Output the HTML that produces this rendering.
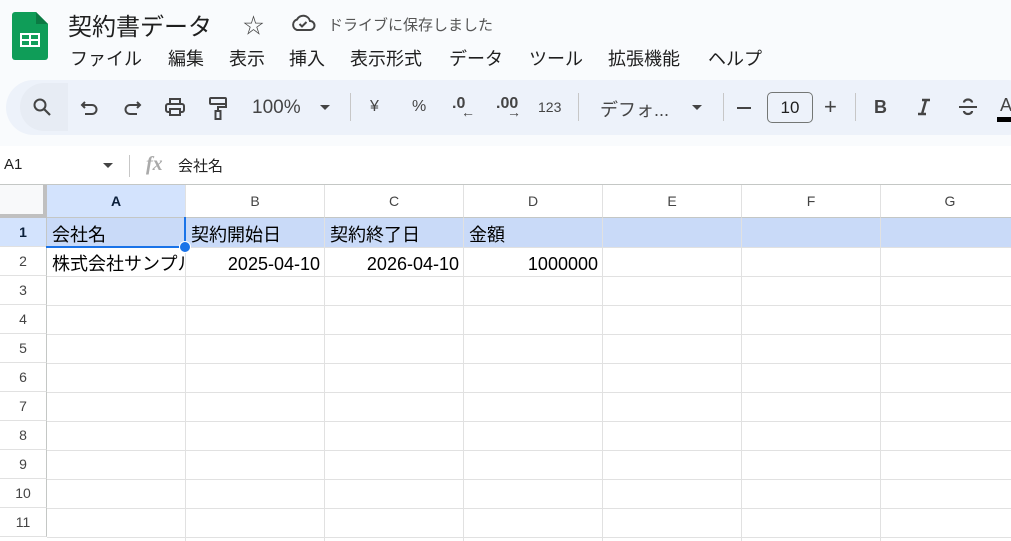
<!DOCTYPE html><html><head><meta charset="utf-8"><style>
*{margin:0;padding:0;box-sizing:border-box}
body{width:1011px;height:541px;overflow:hidden;background:#f9fbfd;font-family:"Liberation Sans","Noto Sans CJK JP",sans-serif;position:relative;color:#1f1f1f}
.a{position:absolute;white-space:nowrap}
.tb{position:absolute;left:6px;top:80px;width:1030px;height:55px;background:#edf2fa;border-radius:28px}
.sep{position:absolute;top:93px;width:1px;height:28px;background:#c7c7c7}
.grid{position:absolute;left:0;top:185px;width:1011px;height:356px;background:#fff}
.ch{position:absolute;top:185px;height:33px;border-right:1px solid #e1e1e1;border-bottom:1px solid #c4c7c5;font-size:14px;color:#444;text-align:center;line-height:33px;background:#fff}
.rh{position:absolute;left:0;width:47px;height:29px;border-bottom:1px solid #e1e1e1;border-right:1px solid #c4c7c5;font-size:14px;color:#444;text-align:center;line-height:29px;background:#fff}
.hl{position:absolute;top:218px;height:29px;left:47px;width:964px;background:#c9daf8}
.vl{position:absolute;top:218px;width:1px;height:323px;background:#e1e1e1}
.hz{position:absolute;left:47px;width:964px;height:1px;background:#e1e1e1}
.c{position:absolute;font-size:18px;color:#000;line-height:22px;white-space:nowrap}
</style></head><body>
<svg class="a" style="left:12px;top:12px" width="36" height="48" viewBox="0 0 36 48"><path d="M3 0h21l12 12v33a3 3 0 0 1-3 3H3a3 3 0 0 1-3-3V3a3 3 0 0 1 3-3z" fill="#0f9d58"/><path d="M24 0l12 12H24z" fill="#0b7a43"/><rect x="8" y="21" width="20" height="14" fill="#fff"/><rect x="10" y="23" width="7" height="4" fill="#0f9d58"/><rect x="19" y="23" width="7" height="4" fill="#0f9d58"/><rect x="10" y="29" width="7" height="4" fill="#0f9d58"/><rect x="19" y="29" width="7" height="4" fill="#0f9d58"/></svg>
<div class="a" style="left:68px;top:7px;font-size:24px;color:#1f1f1f">契約書データ</div>
<div class="a" style="left:243px;top:10px;font-size:21px;color:#444">☆</div>
<svg class="a" style="left:290px;top:13px" width="26" height="20" viewBox="0 0 26 20"><path d="M7 17h13a4.5 4.5 0 0 0 0-9 7 7 0 0 0-13-1.5A5.5 5.5 0 0 0 7 17z" fill="none" stroke="#444" stroke-width="2"/><path d="M9.5 11l2.5 2.5 4.5-4.5" fill="none" stroke="#444" stroke-width="2"/></svg>
<div class="a" style="left:328px;top:14px;font-size:15px;color:#555">ドライブに保存しました</div>
<div class="a" style="left:70px;top:45px;font-size:18px">ファイル</div>
<div class="a" style="left:168px;top:45px;font-size:18px">編集</div>
<div class="a" style="left:229px;top:45px;font-size:18px">表示</div>
<div class="a" style="left:289px;top:45px;font-size:18px">挿入</div>
<div class="a" style="left:350px;top:45px;font-size:18px">表示形式</div>
<div class="a" style="left:449px;top:45px;font-size:18px">データ</div>
<div class="a" style="left:529px;top:45px;font-size:18px">ツール</div>
<div class="a" style="left:608px;top:45px;font-size:18px">拡張機能</div>
<div class="a" style="left:708px;top:45px;font-size:18px">ヘルプ</div>
<div class="tb"></div>
<div class="a" style="left:20px;top:83px;width:48px;height:48px;background:#e7ecf4;border-radius:24px 0 0 24px"></div>
<svg class="a" style="left:32px;top:97px" width="20" height="20" viewBox="0 0 20 20"><circle cx="8" cy="8" r="5.5" fill="none" stroke="#444" stroke-width="2"/><path d="M12 12l6 6" stroke="#444" stroke-width="2.2"/></svg>
<svg class="a" style="left:80px;top:98px" width="20" height="18" viewBox="0 0 20 18"><path d="M5 4L2 7l3 3M2 7h10a4.5 4.5 0 0 1 0 9H5" fill="none" stroke="#444" stroke-width="2"/></svg>
<svg class="a" style="left:122px;top:98px" width="20" height="18" viewBox="0 0 20 18"><path d="M15 4l3 3-3 3M18 7H8a4.5 4.5 0 0 0 0 9h7" fill="none" stroke="#444" stroke-width="2"/></svg>
<svg class="a" style="left:164px;top:97px" width="22" height="20" viewBox="0 0 22 20"><rect x="2" y="7" width="18" height="8" rx="2" fill="none" stroke="#444" stroke-width="2"/><rect x="6" y="2" width="10" height="5" fill="none" stroke="#444" stroke-width="2"/><rect x="6" y="12" width="10" height="6" fill="#edf2fa" stroke="#444" stroke-width="2"/></svg>
<svg class="a" style="left:207px;top:96px" width="22" height="24" viewBox="0 0 22 24"><rect x="3" y="2" width="16" height="6" rx="1" fill="none" stroke="#444" stroke-width="2"/><path d="M19 5h0v6H11v4" fill="none" stroke="#444" stroke-width="2"/><rect x="8.5" y="15" width="5" height="8" fill="none" stroke="#444" stroke-width="2"/></svg>
<div class="a" style="left:252px;top:97px;font-size:19px;color:#444">100%</div>
<div class="a" style="left:320px;top:105px;width:0;height:0;border-left:5px solid transparent;border-right:5px solid transparent;border-top:5px solid #444"></div>
<div class="sep" style="left:350px"></div>
<div class="a" style="left:370px;top:98px;font-size:16px;color:#444">¥</div>
<div class="a" style="left:412px;top:98px;font-size:16px;color:#444">%</div>
<div class="a" style="left:452px;top:95px;font-size:16px;color:#444;font-weight:bold">.0</div>
<div class="a" style="left:461px;top:104px;font-size:14px;color:#444;font-weight:bold">←</div>
<div class="a" style="left:496px;top:95px;font-size:16px;color:#444;font-weight:bold">.00</div>
<div class="a" style="left:507px;top:104px;font-size:14px;color:#444;font-weight:bold">→</div>
<div class="a" style="left:538px;top:99px;font-size:14px;color:#444">123</div>
<div class="sep" style="left:578px"></div>
<div class="a" style="left:600px;top:96px;font-size:18px;color:#444">デフォ...</div>
<div class="a" style="left:692px;top:105px;width:0;height:0;border-left:5px solid transparent;border-right:5px solid transparent;border-top:5px solid #444"></div>
<div class="sep" style="left:723px"></div>
<div class="a" style="left:737px;top:107px;width:14px;height:2px;background:#444"></div>
<div class="a" style="left:767px;top:92px;width:46px;height:31px;border:1px solid #747775;border-radius:5px;font-size:17px;color:#1f1f1f;text-align:center;line-height:29px">10</div>
<div class="a" style="left:824px;top:94px;font-size:22px;color:#444">+</div>
<div class="sep" style="left:855px"></div>
<div class="a" style="left:874px;top:97px;font-size:18px;color:#444;font-weight:bold">B</div>
<svg class="a" style="left:914px;top:97px" width="20" height="20" viewBox="0 0 20 20"><path d="M8 3h8M4 17h8M12 3L8 17" stroke="#444" stroke-width="2.4" fill="none"/></svg>
<svg class="a" style="left:957px;top:96px" width="22" height="22" viewBox="0 0 22 22"><path d="M2 11h18" stroke="#444" stroke-width="2"/><path d="M15 6.5a4 3 0 0 0-8 0M7 15a4 3 0 0 0 8 0" stroke="#444" stroke-width="2.2" fill="none"/></svg>
<div class="a" style="left:1000px;top:95px;font-size:18px;color:#444">A</div>
<div class="a" style="left:997px;top:117px;width:14px;height:5px;background:#000"></div>
<div class="a" style="left:0;top:146px;width:1011px;height:39px;background:#fff"></div>
<div class="a" style="left:4px;top:156px;font-size:15px;color:#1f1f1f">A1</div>
<div class="a" style="left:103px;top:163px;width:0;height:0;border-left:5px solid transparent;border-right:5px solid transparent;border-top:5px solid #444"></div>
<div class="a" style="left:129px;top:155px;width:1px;height:22px;background:#c7c7c7"></div>
<div class="a" style="left:146px;top:153px;font-size:20px;color:#aaa;font-style:italic;font-family:'Liberation Serif',serif;font-weight:bold">fx</div>
<div class="a" style="left:178px;top:155px;font-size:15px;color:#1f1f1f">会社名</div>
<div class="a" style="left:0;top:184px;width:1011px;height:1px;background:#c4c7c5"></div>
<div class="grid"></div>
<div class="hl"></div>
<div class="a" style="left:0;top:185px;width:47px;height:33px;background:#f8f9fa;border-right:4px solid #c0c0c0;border-bottom:4px solid #c0c0c0"></div>
<div class="ch" style="left:47px;width:139px;background:#d3e3fd;font-weight:bold;color:#0b1f3a">A</div>
<div class="ch" style="left:186px;width:139px">B</div>
<div class="ch" style="left:325px;width:139px">C</div>
<div class="ch" style="left:464px;width:139px">D</div>
<div class="ch" style="left:603px;width:139px">E</div>
<div class="ch" style="left:742px;width:139px">F</div>
<div class="ch" style="left:881px;width:139px">G</div>
<div class="rh" style="top:218px;background:#d3e3fd;font-weight:bold;color:#0b1f3a">1</div>
<div class="rh" style="top:247px">2</div>
<div class="rh" style="top:276px">3</div>
<div class="rh" style="top:305px">4</div>
<div class="rh" style="top:334px">5</div>
<div class="rh" style="top:363px">6</div>
<div class="rh" style="top:392px">7</div>
<div class="rh" style="top:421px">8</div>
<div class="rh" style="top:450px">9</div>
<div class="rh" style="top:479px">10</div>
<div class="rh" style="top:508px">11</div>
<div class="vl" style="left:185px"></div><div class="vl" style="left:324px"></div><div class="vl" style="left:463px"></div><div class="vl" style="left:602px"></div><div class="vl" style="left:741px"></div><div class="vl" style="left:880px"></div>
<div class="hz" style="top:247px"></div><div class="hz" style="top:276px"></div><div class="hz" style="top:305px"></div><div class="hz" style="top:334px"></div><div class="hz" style="top:363px"></div><div class="hz" style="top:392px"></div><div class="hz" style="top:421px"></div><div class="hz" style="top:450px"></div><div class="hz" style="top:479px"></div><div class="hz" style="top:508px"></div><div class="hz" style="top:537px"></div>
<div class="c" style="left:52px;top:224px">会社名</div>
<div class="c" style="left:191px;top:224px">契約開始日</div>
<div class="c" style="left:330px;top:224px">契約終了日</div>
<div class="c" style="left:469px;top:224px">金額</div>
<div class="c" style="left:52px;top:253px;width:132px;height:22px;overflow:hidden">株式会社サンプル</div>
<div class="c" style="left:186px;top:253px;width:134px;text-align:right">2025-04-10</div>
<div class="c" style="left:325px;top:253px;width:134px;text-align:right">2026-04-10</div>
<div class="c" style="left:464px;top:253px;width:134px;text-align:right">1000000</div>
<div class="a" style="left:46px;top:217px;width:140px;height:31px;border-right:2px solid #1a73e8;border-bottom:2px solid #1a73e8"></div>
<div class="a" style="left:179px;top:241px;width:12px;height:12px;border-radius:50%;background:#1a73e8;border:1px solid #fff"></div>
</body></html>
